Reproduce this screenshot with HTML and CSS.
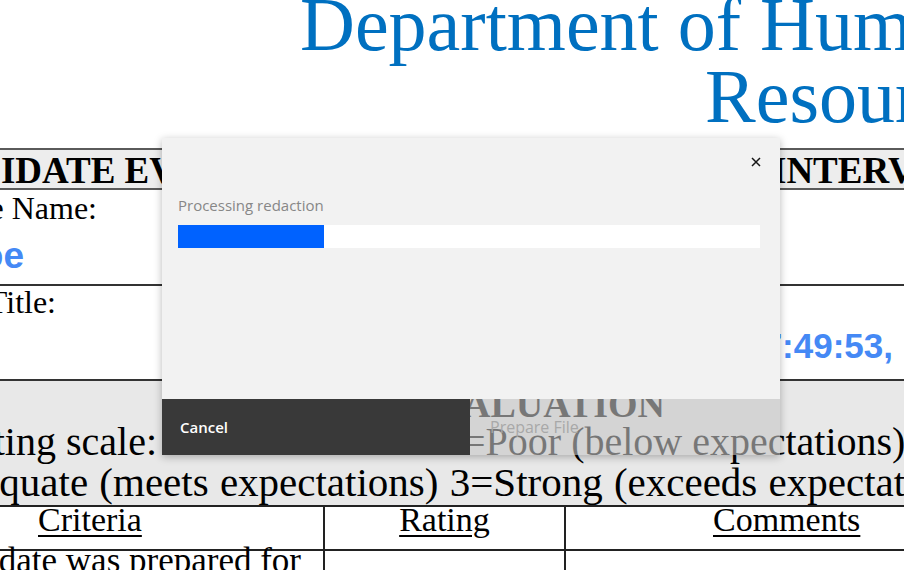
FILE: index.html
```html
<!DOCTYPE html>
<html lang="en">
<head>
<meta charset="utf-8">
<title>Processing redaction</title>
<link rel="stylesheet" href="styles.css">
</head>
<body>
<div class="page">
  <div class="doc">
    <div class="title">
      <div class="title-line l1">Department of Human</div>
      <div class="title-line l2">Resources</div>
    </div>

    <div class="hdr">
      <div class="hdr-left">CANDIDATE EVALUATION FORM</div>
      <div class="hdr-right">INTERVIEW</div>
    </div>

    <div class="row row-name">
      <div class="endbox w-name"><span>Candidate Name:</span></div>
      <div class="endbox w-val"><span class="val">John Doe</span></div>
    </div>

    <div class="row row-title">
      <div class="endbox w-title"><span>Position Title:</span></div>
      <div class="endbox w-date"><span class="val date">12/05/2023 17:49:53,</span></div>
    </div>

    <div class="band">
      <div class="band-head">
        <div class="endbox w-head"><span>INTERVIEW EVALUATION</span></div>
      </div>
      <div class="band-line scale">
        <div class="endbox w-scale"><span>Rating scale:</span></div>
        <div class="endbox w-mid"><span>0=Not rated 1</span></div>
        <div class="scale-rest">=Poor (below expectations)</div>
      </div>
      <div class="band-line adequate">Adequate (meets expectations) 3=Strong (exceeds expectations)</div>
    </div>

    <div class="table">
      <div class="cell c1 th"><span class="u">Criteria</span></div>
      <div class="cell c2 th"><span class="u">Rating</span></div>
      <div class="cell c3 th"><span class="u">Comments</span></div>
      <div class="cell c1 td"><div class="endbox w-crit"><span>Candidate was prepared for</span></div></div>
      <div class="cell c2 td"></div>
      <div class="cell c3 td"></div>
    </div>
  </div>

  <div class="modal" role="dialog" aria-label="Prepare File">
    <div class="modal-body">
      <div class="modal-top">
        <button class="close" aria-label="Close">
          <svg width="10" height="10" viewBox="0 0 10 10"><path d="M1 1 L9 9 M9 1 L1 9" stroke="#161616" stroke-width="1.5" fill="none"/></svg>
        </button>
      </div>
      <div class="label">Processing redaction</div>
      <div class="progress"><div class="bar" style="width:25%"></div></div>
    </div>
    <div class="modal-foot">
      <button class="btn btn-cancel">Cancel</button>
      <button class="btn btn-prepare" disabled>Prepare File</button>
    </div>
  </div>
</div>
</body>
</html>
```
FILE: styles.css
```css
html, body {
  margin: 0;
  padding: 0;
  background: #ffffff;
}
.page {
  position: relative;
  width: 904px;
  height: 570px;
  overflow: hidden;
}
.doc {
  font-family: "Liberation Serif", "Times New Roman", serif;
  color: #000;
  white-space: nowrap;
}

/* title */
.title {
  margin-top: -12px;
  color: #0070c0;
  font-size: 76px;
  line-height: 72px;
}
.l1 { padding-left: 300px; }
.l2 { padding-left: 705px; }

/* header row */
.hdr {
  margin-top: 16px;
  height: 42px;
  box-sizing: border-box;
  border-top: 2px solid #5a5a5a;
  border-bottom: 2px solid #5a5a5a;
  background: #ededed;
  display: flex;
  font-weight: bold;
  font-size: 37px;
  line-height: 42px;
}
.hdr-left {
  flex: 0 0 878px;
  margin-left: -106px;
  overflow: hidden;
}
.hdr-right { flex: 0 0 auto; }

.endbox {
  display: flex;
  justify-content: flex-end;
}
.endbox > span { flex: 0 0 auto; }

.row {
  box-sizing: border-box;
  border-bottom: 2px solid #333;
  font-size: 32px;
}
.row-name { height: 96px; line-height: 36px; }
.row-title { height: 95px; line-height: 32px; }
.val {
  font-family: "Liberation Sans", Arial, sans-serif;
  font-weight: bold;
  color: #4589f5;
  font-size: 37px;
}
.val.date { font-size: 35px; }
.w-name { width: 97px; }
.w-val { width: 24px; margin-top: 10px; line-height: 40px; }
.w-title { width: 56px; }
.w-date { width: 893px; margin-top: 8px; line-height: 40px; }

/* grey band */
.band {
  background: #e8e8e8;
  height: 124px;
  box-sizing: border-box;
}
.band-head {
  height: 41px;
  line-height: 47px;
  font-size: 38px;
  font-weight: bold;
}
.w-head { width: 665px; }
.band-line {
  height: 40px;
  line-height: 40px;
  font-size: 40px;
}
.scale { display: flex; }
.w-scale { width: 157px; flex: 0 0 auto; }
.w-mid { width: 306px; flex: 0 0 auto; }
.adequate { font-size: 41px; text-indent: -69px; word-spacing: 1px; }

/* table */
.table {
  display: grid;
  grid-template-columns: 325px 241px 338px;
  grid-template-rows: 44px 40px;
  border-top: 2px solid #222;
  font-size: 34px;
}
.cell {
  box-sizing: border-box;
  border-bottom: 2px solid #222;
}
.c1, .c2 { border-right: 2px solid #222; }
.th { line-height: 26px; }
.c1.th { padding-left: 38px; }
.c2.th { text-align: center; }
.c3.th { padding-left: 147px; }
.u { text-decoration: underline; text-decoration-thickness: 2px; text-underline-offset: 4px; }
.td { line-height: 19px; font-size: 35px; }
.w-crit { width: 301px; }

/* modal */
.modal {
  position: absolute;
  left: 162px;
  top: 138px;
  width: 618px;
  box-shadow: 0 2px 8px rgba(0, 0, 0, 0.28);
  font-family: "Open Sans", "Noto Sans", sans-serif;
}
.modal-body {
  height: 261px;
  box-sizing: border-box;
  background: #f2f2f2;
  padding: 0 20px 0 16px;
  display: flex;
  flex-direction: column;
}
.modal-top {
  height: 48px;
  display: flex;
  justify-content: flex-end;
  margin-right: -20px;
}
.close {
  width: 48px;
  height: 48px;
  border: 0;
  padding: 0;
  background: transparent;
  display: flex;
  align-items: center;
  justify-content: center;
}
.label {
  margin-top: 10px;
  font-size: 15px;
  line-height: 18px;
  color: #878787;
}
.progress {
  margin-top: 11px;
  height: 23px;
  background: #ffffff;
}
.bar {
  height: 100%;
  background: #0062ff;
}
.modal-foot {
  display: flex;
  height: 56px;
}
.btn {
  border: 0;
  margin: 0;
  font-family: "Open Sans", "Noto Sans", sans-serif;
  font-size: 15px;
  text-align: left;
  display: flex;
  align-items: center;
}
.btn-cancel {
  width: 308px;
  background: #393939;
  color: #ffffff;
  font-weight: 600;
  padding-left: 18px;
}
.btn-prepare {
  flex: 1;
  background: rgba(198, 198, 198, 0.6);
  color: #a8a8a8;
  font-size: 16px;
  padding-left: 20px;
}
```
